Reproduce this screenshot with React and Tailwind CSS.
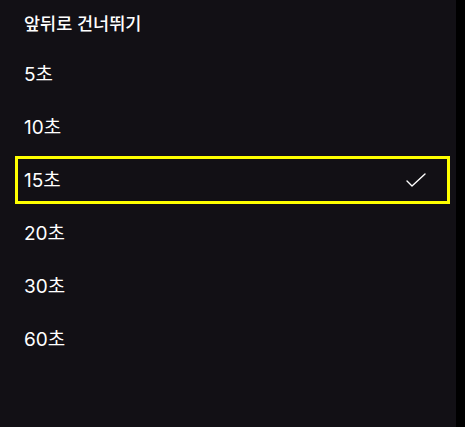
import React, { useState } from 'react'

const options = ['5초', '10초', '15초', '20초', '30초', '60초']

const App = () => {
  const [selected, setSelected] = useState('15초')

  return (
    <div className="w-[465px] h-[427px] bg-black flex" style={{ fontFamily: 'Inter, "Noto Sans CJK KR", sans-serif' }}>
      <div className="w-[456px] h-full bg-[#121015] flex flex-col">
        <div className="h-[47px] flex items-center pl-[24px] pt-[2px] text-white text-[17.5px] font-medium">
          앞뒤로 건너뛰기
        </div>
        <ul className="flex flex-col">
          {options.map((opt) => {
            const isSelected = opt === selected
            return (
              <li key={opt} className="h-[53px] pl-[15px] pr-[6px] flex items-center">
                <button
                  onClick={() => setSelected(opt)}
                  className={`w-full h-[48px] flex items-center justify-between pl-[6px] pr-[21px] border-[3px] text-white text-[19px] ${isSelected ? 'border-[#ffff00]' : 'border-transparent'}`}
                >
                  <span className="pt-[3px]">{opt}</span>
                  {isSelected && (
                    <svg width="20" height="16" viewBox="0 0 20 16" fill="none" stroke="white" strokeWidth="1.4" strokeLinecap="round" strokeLinejoin="round">
                      <path d="M1 9 L6 14 L19 2" />
                    </svg>
                  )}
                </button>
              </li>
            )
          })}
        </ul>
      </div>
    </div>
  )
}

export default App
